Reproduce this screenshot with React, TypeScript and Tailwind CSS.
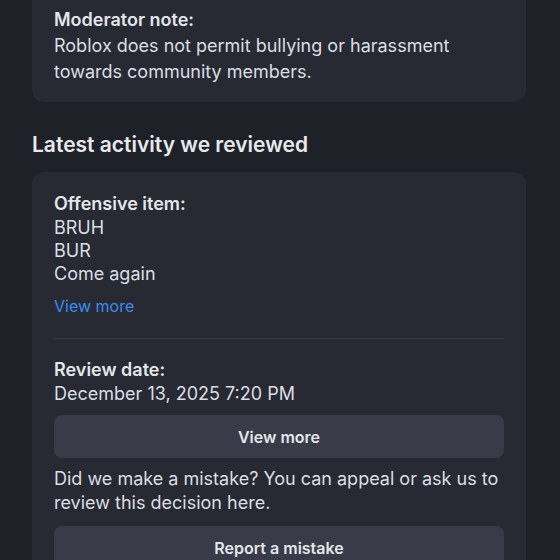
const FONT = { fontFamily: 'Inter, "Noto Sans", sans-serif' };

function Field({ label, children }: { label: string; children: React.ReactNode }) {
  return (
    <div>
      <p className="font-semibold text-[#e4e6ea]">{label}</p>
      {children}
    </div>
  );
}

export default function App() {
  return (
    <div
      className="h-[560px] w-[560px] overflow-hidden bg-[#1f2129] pl-8 pr-[34px] text-[18px] leading-[24px] text-[#dcdee3]"
      style={FONT}
    >
      <div className="rounded-b-xl bg-[#272a33] px-[22px] pb-[17px] pt-[8px]">
        <Field label="Moderator note:">
          <p className="mt-[1px] leading-[26px]">
            Roblox does not permit bullying or harassment towards community members.
          </p>
        </Field>
      </div>

      <h2 className="mt-[29px] text-[21px] font-semibold leading-[28px] text-[#e8e9ed]">
        Latest activity we reviewed
      </h2>

      <div className="mt-[13px] rounded-xl bg-[#272a33] px-[22px] pt-[20px] pb-6">
        <Field label="Offensive item:">
          <div className="leading-[23px]">
            <p>BRUH</p>
            <p>BUR</p>
            <p>Come again</p>
          </div>
        </Field>
        <button className="mt-[9px] block text-[16px] leading-[24px] text-[#3d8bef]">View more</button>

        <div className="mt-[20px] h-px bg-[#3b3e48]" />

        <div className="mt-[19px]">
          <Field label="Review date:">
            <p>December 13, 2025 7:20 PM</p>
          </Field>
        </div>

        <button className="mt-[9px] flex h-[43px] w-full items-center justify-center rounded-lg bg-[#393c48] text-[16px] font-semibold text-[#e4e6ea]">
          View more
        </button>

        <p className="mt-[9px]">
          Did we make a mistake? You can appeal or ask us to review this decision here.
        </p>

        <button className="mt-[11px] flex h-[43px] w-full items-center justify-center rounded-lg bg-[#393c48] text-[16px] font-semibold text-[#e4e6ea]">
          Report a mistake
        </button>
      </div>
    </div>
  );
}
